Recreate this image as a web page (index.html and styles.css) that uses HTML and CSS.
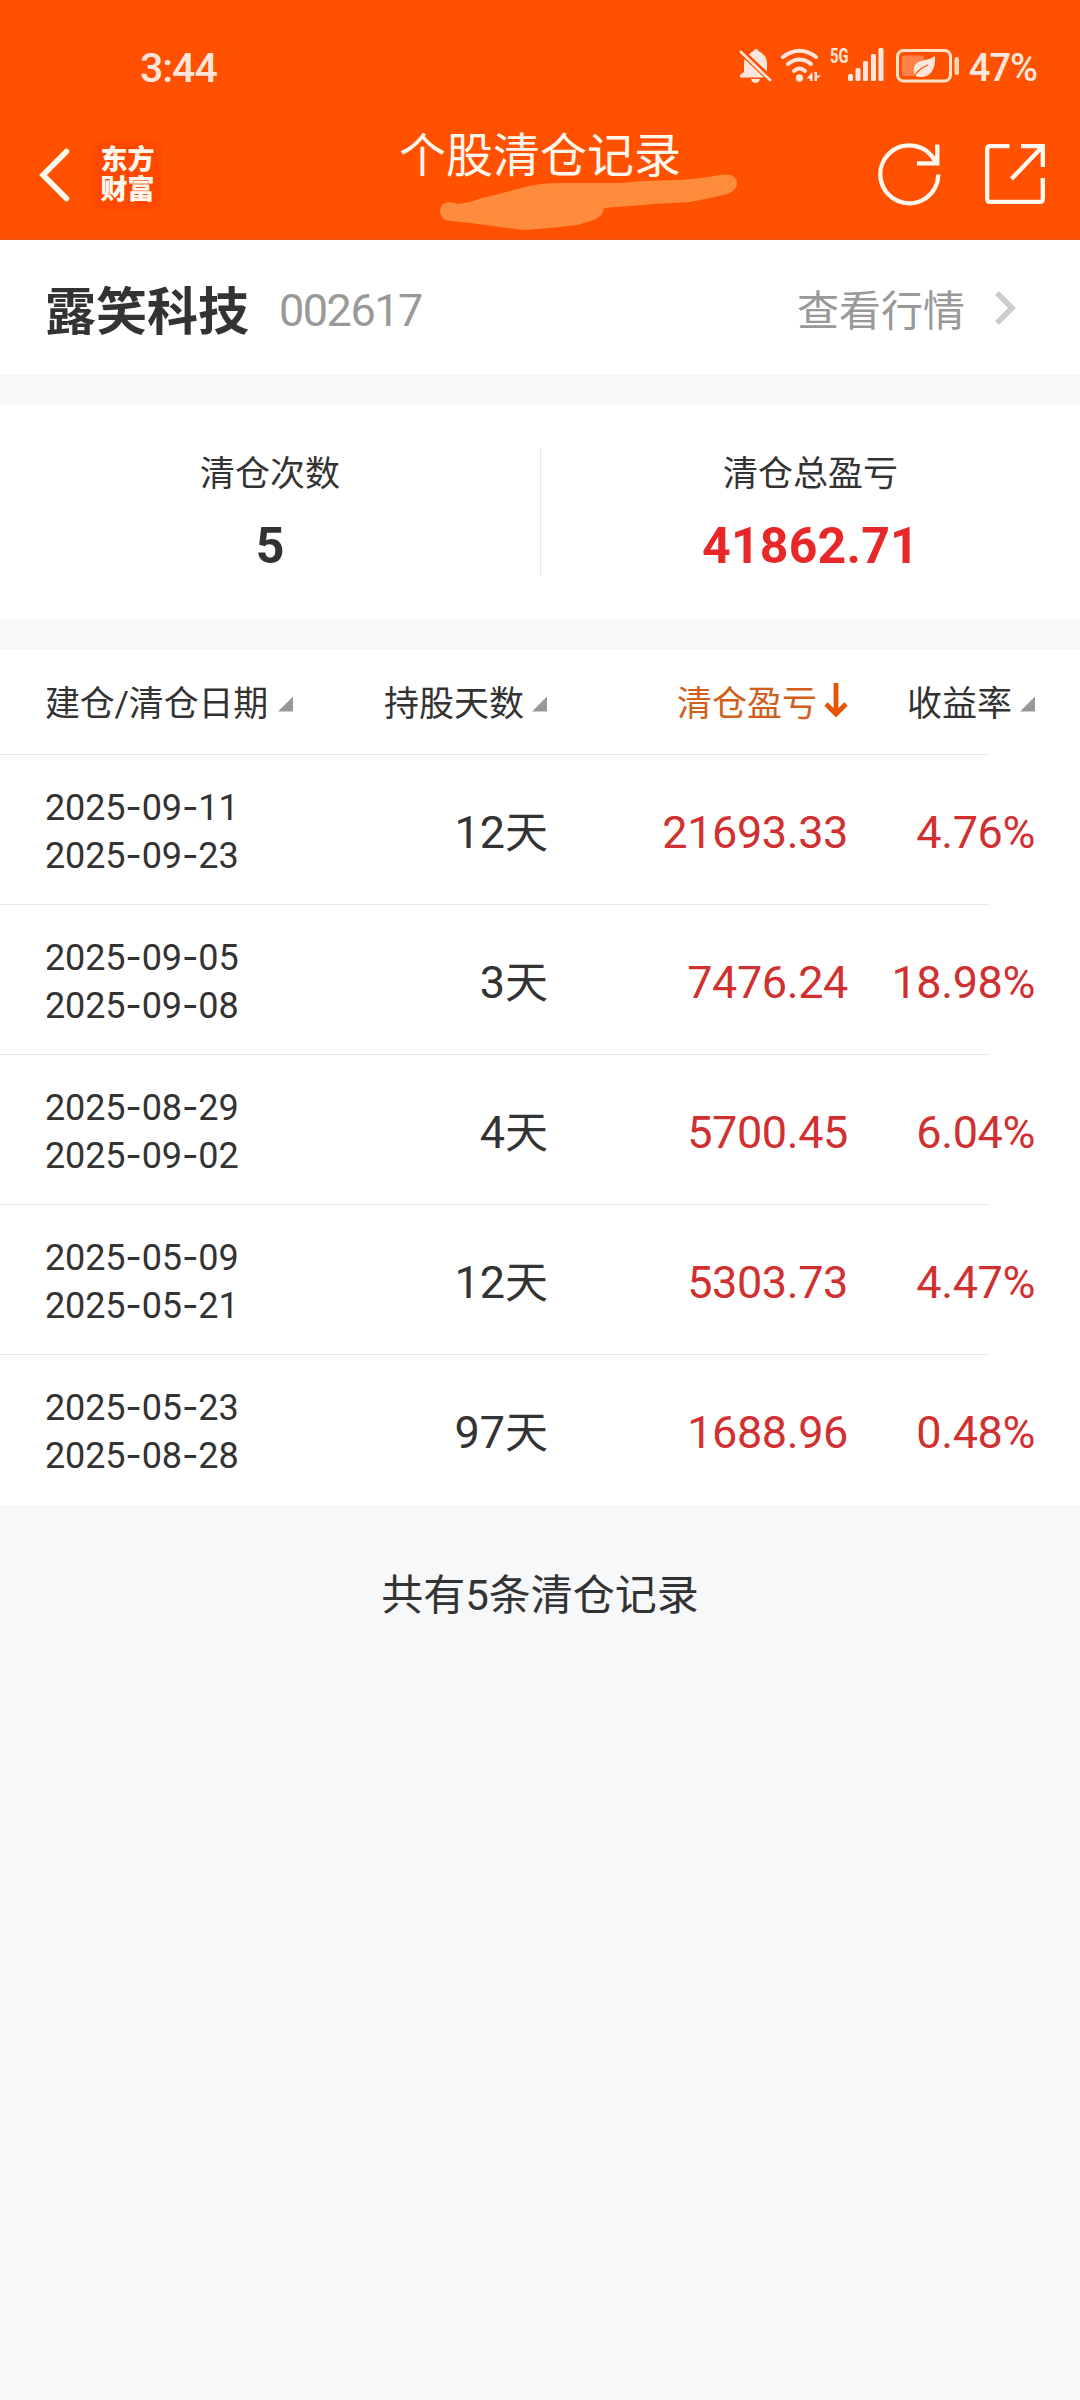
FILE: index.html
```html
<!DOCTYPE html>
<html lang="zh-CN">
<head>
    <meta charset="UTF-8">
    <meta name="viewport" content="width=device-width, initial-scale=1.0">
    <title>个股清仓记录</title>
    <link rel="stylesheet" href="styles.css">
</head>
<body>
    <header>
        <div class="status-bar">
            <span class="time">3:44</span>
            <div class="status-icons">
                <svg class="bell" width="34" height="36" viewBox="0 0 34 36">
                    <path d="M5.500 11 L25 29.500 H1 V27 L5 24 V14 Z M10 6.500 Q12 4 14 3.500 Q15 1 17 1 Q19 1 20 3.500 Q28 7 28 15 V23.500 Z M12 31 H21 Q20 35 16.500 35 Q13 35 12 31 Z" fill="#ffe6dc"/>
                    <path d="M2 4 L31 32" stroke="#ffe6dc" stroke-width="2.600" stroke-linecap="round"/>
                </svg>
                <svg class="wifi" width="42" height="36" viewBox="0 0 42 36">
                    <g fill="none" stroke="#ffe6dc" stroke-width="4" stroke-linecap="round">
                        <path d="M3 9 Q19.500 -3.500 36 9"/>
                        <path d="M8 16 Q19.500 7 31 16"/>
                        <path d="M14 23 Q19.500 18 25 23"/>
                    </g>
                    <circle cx="19.500" cy="30" r="3.700" fill="#ffe6dc"/>
                    <path d="M32.500 24 V33 H30 V30.500 H26.500 Z M34.500 24 V33 H37 V30.500 L41 27.500 H37 V24 Z" fill="#ffe6dc"/>
                </svg>
                <span class="net">5G</span>
                <svg class="signal" width="36" height="34" viewBox="0 0 36 34">
                    <g fill="#ffe6dc">
                        <rect x="0" y="26" width="5" height="7" rx="1.500"/>
                        <rect x="7.500" y="20" width="5" height="13" rx="1.500"/>
                        <rect x="15" y="13" width="5" height="20" rx="1.500"/>
                        <rect x="23" y="6" width="5" height="27" rx="1.500"/>
                        <rect x="30.500" y="0" width="5" height="33" rx="1.500"/>
                    </g>
                </svg>
                <svg class="battery" width="64" height="34" viewBox="0 0 64 34">
                    <rect x="1.500" y="1.500" width="53" height="30.500" rx="6" fill="none" stroke="#ffe0c8" stroke-width="3"/>
                    <rect x="6" y="6.500" width="22" height="20.500" rx="3" fill="#ff8048"/>
                    <path d="M39 7 Q40 28 24 28 L19 27 Q14 13 29 11 Q35 10 39 7 Z" fill="#ffe6dc"/>
                    <path d="M18 28 Q22 20 32 16" fill="none" stroke="#ff5100" stroke-width="1.300"/>
                    <rect x="58.500" y="8" width="4.500" height="18" rx="2" fill="#ffd8b8"/>
                </svg>
                <span class="percent">47%</span>
            </div>
        </div>
        <nav class="nav-bar">
            <div class="nav-left">
                <svg width="32" height="54" viewBox="0 0 32 54">
                    <path d="M28.500 3.500 L5 27 L28.500 50.500" fill="none" stroke="#fff8ee" stroke-width="5.500" stroke-linecap="round"/>
                </svg>
                <div class="logo">东方<br>财富</div>
            </div>
            <h1>个股清仓记录</h1>
            <div class="nav-right">
                <svg width="64" height="64" viewBox="0 0 64 64">
                    <g fill="none" stroke="#fff8ee" stroke-width="4.300">
                        <path d="M60.300 32.500 A29 29 0 1 1 58 21"/>
                        <path d="M59.300 2.500 V21.300 H39"/>
                    </g>
                </svg>
                <svg width="62" height="62" viewBox="0 0 62 62">
                    <g fill="none" stroke="#fff8ee" stroke-width="4.300">
                        <path d="M25.500 3.200 H6 Q3.200 3.200 3.200 6 V56 Q3.200 58.800 6 58.800 H56 Q58.800 58.800 58.800 56 V35"/>
                        <path d="M37 3.200 H58.800 V24 M58 4 L27.500 36"/>
                    </g>
                </svg>
            </div>
        </nav>
        <!-- marker stroke under the title -->
        <svg class="marker" width="300" height="58" viewBox="0 0 300 58">
            <path d="M0 38 Q0 28 10 28 L18 30 L30 28 L42 24 L55 21 L70 17 L85 13 L100 10 L115 9 L180 9 L205 7 L240 6 L262 4 L280 1 Q297 -2 297 10 Q296 18 284 21 L265 25 L250 28 L215 30 L190 32 L164 34 Q163 44 150 47 L138 51 L110 54 L85 56 L60 53 L30 49 L12 47 Q1 47 0 38 Z" fill="#ff8c3c"/>
        </svg>
    </header>

    <section class="stock">
        <h2>露笑科技</h2>
        <span class="code">002617</span>
        <a class="quote">查看行情
            <svg width="24" height="38" viewBox="0 0 24 38">
                <path d="M3 4 L18 19 L3 34" fill="none" stroke="#ccc" stroke-width="5.500"/>
            </svg>
        </a>
    </section>

    <section class="summary">
        <div class="summary-item">
            <p>清仓次数</p>
            <strong>5</strong>
        </div>
        <div class="summary-item">
            <p>清仓总盈亏</p>
            <strong class="total">41862.71</strong>
        </div>
    </section>

    <main>
        <div class="row head">
            <div class="date-head">建仓/清仓日期<i class="sort"></i></div>
            <div>持股天数<i class="sort"></i></div>
            <div class="active">清仓盈亏<svg width="24" height="34" viewBox="0 0 24 34"><path d="M12 0 V30 M2 21 L12 31 L22 21" fill="none" stroke="#e65505" stroke-width="4.800"/></svg></div>
            <div>收益率<i class="sort"></i></div>
        </div>
        <div class="row">
            <div class="dates">2025<i>-</i>09<i>-</i>11<br>2025<i>-</i>09<i>-</i>23</div>
            <div class="days">12<span>天</span></div>
            <div class="profit">21693.33</div>
            <div class="profit">4.76%</div>
        </div>
        <div class="row">
            <div class="dates">2025<i>-</i>09<i>-</i>05<br>2025<i>-</i>09<i>-</i>08</div>
            <div class="days">3<span>天</span></div>
            <div class="profit">7476.24</div>
            <div class="profit">18.98%</div>
        </div>
        <div class="row">
            <div class="dates">2025<i>-</i>08<i>-</i>29<br>2025<i>-</i>09<i>-</i>02</div>
            <div class="days">4<span>天</span></div>
            <div class="profit">5700.45</div>
            <div class="profit">6.04%</div>
        </div>
        <div class="row">
            <div class="dates">2025<i>-</i>05<i>-</i>09<br>2025<i>-</i>05<i>-</i>21</div>
            <div class="days">12<span>天</span></div>
            <div class="profit">5303.73</div>
            <div class="profit">4.47%</div>
        </div>
        <div class="row">
            <div class="dates">2025<i>-</i>05<i>-</i>23<br>2025<i>-</i>08<i>-</i>28</div>
            <div class="days">97<span>天</span></div>
            <div class="profit">1688.96</div>
            <div class="profit">0.48%</div>
        </div>
    </main>

    <footer>共有5条清仓记录</footer>
</body>
</html>
```

FILE: styles.css
```css
* {
    box-sizing: border-box;
}
body {
    margin: 0;
    min-height: 2400px;
    background-color: #F7F8FA;
    color: #333;
    font-family: Roboto, "Noto Sans CJK SC", sans-serif;
}
h1, h2, p {
    margin: 0;
}
svg {
    display: block;
    flex-shrink: 0;
}
header {
    position: relative;
    height: 240px;
    background-color: #FF5100;
    border-bottom: 1px solid #E2581C;
}

/* status bar */
.status-bar {
    display: flex;
    justify-content: space-between;
    height: 132px;
    padding: 0 43px 0 140px;
    color: #FFE6DC;
}
.time {
    padding-top: 44px;
    font-size: 41px;
    line-height: 48px;
    font-weight: 500;
    letter-spacing: -1px;
}
.status-icons {
    display: flex;
    align-items: flex-start;
    padding-top: 48px;
}
.wifi {
    margin-left: 7px;
}
.net {
    width: 18px;
    margin-left: 8px;
    font-size: 21px;
    line-height: 16px;
    font-weight: 700;
    white-space: nowrap;
    transform: scaleX(0.7);
    transform-origin: left;
}
.battery {
    margin-left: 12px;
    margin-top: 1px;
}
.percent {
    margin-left: 9px;
    font-size: 38px;
    line-height: 40px;
    font-weight: 500;
    letter-spacing: -1px;
}

/* title bar */
.nav-bar {
    display: flex;
    justify-content: space-between;
    padding: 0 34px 0 38px;
}
.nav-left {
    display: flex;
    align-items: center;
    gap: 22px;
    width: 301px;
    height: 86px;
}
.logo {
    width: 71px;
    height: 71px;
    padding-top: 5px;
    border-radius: 16px;
    background-color: #FF4800;
    color: #FFF8EE;
    font-size: 27px;
    line-height: 30px;
    font-weight: 900;
    text-align: center;
}
h1 {
    color: #FFF8EE;
    font-size: 47px;
    line-height: 48px;
    font-weight: 400;
}
.nav-right {
    display: flex;
    justify-content: flex-end;
    align-items: center;
    gap: 42px;
    width: 305px;
    height: 84px;
}
.marker {
    position: absolute;
    left: 440px;
    top: 174px;
}

/* stock name */
.stock {
    display: flex;
    align-items: center;
    height: 135px;
    padding: 0 62px 0 45px;
    background-color: #FFF;
}
h2 {
    font-size: 51px;
    font-weight: 700;
}
.code {
    margin-left: 30px;
    padding-top: 5px;
    color: #999;
    font-size: 45px;
    letter-spacing: -1.5px;
}
.quote {
    display: flex;
    align-items: center;
    gap: 29px;
    margin-left: auto;
    color: #999;
    font-size: 42px;
}

/* totals */
.summary {
    display: flex;
    height: 214px;
    margin: 30px 0;
    padding: 43px 0;
    background-color: #FFF;
}
.summary-item {
    width: 50%;
    text-align: center;
}
.summary-item + .summary-item {
    border-left: 1px solid #E8E8E8;
}
.summary-item p {
    padding-top: 2px;
    font-size: 35px;
    line-height: 50px;
}
.summary-item strong {
    display: block;
    margin-top: 17px;
    font-size: 50px;
    line-height: 58px;
}
.summary-item .total {
    color: #E82828;
    letter-spacing: 0.2px;
}

/* records */
main {
    background-color: #FFF;
}
.row {
    position: relative;
    display: grid;
    grid-template-columns: 248px 254px 301px 187px;
    align-items: center;
    height: 150px;
    padding: 0 45px;
    text-align: right;
}
.row + .row::before {
    content: "";
    position: absolute;
    left: 0;
    top: -1px;
    width: 990px;
    height: 1px;
    background-color: #E8E8E8;
}
.row.head {
    height: 105px;
    margin-bottom: 1px;
    padding-bottom: 2px;
    font-size: 35px;
}
.head div {
    display: flex;
    justify-content: flex-end;
    align-items: center;
    white-space: nowrap;
}
.head .date-head {
    justify-content: space-between;
    letter-spacing: -0.2px;
}
.head .active {
    color: #D0601C;
}
.head svg {
    margin-left: 7px;
    margin-top: -2px;
}
.sort {
    width: 15px;
    height: 15px;
    margin-left: 8px;
    margin-top: 7px;
    background-color: #999;
    clip-path: polygon(100% 0, 100% 100%, 0 100%);
}
.dates {
    padding-top: 4px;
    font-size: 36px;
    line-height: 47px;
    letter-spacing: -0.15px;
    text-align: left;
}
.dates i {
    font-family: Inter, sans-serif;
    font-style: normal;
}
.days {
    padding-bottom: 2px;
    font-size: 45px;
}
.days span {
    margin-right: -1px;
    font-size: 43px;
}
.profit {
    padding-top: 4px;
    color: #D03030;
    font-size: 45px;
    letter-spacing: -0.4px;
}
footer {
    padding-top: 61px;
    font-size: 42px;
    line-height: 60px;
    text-align: center;
}
```
